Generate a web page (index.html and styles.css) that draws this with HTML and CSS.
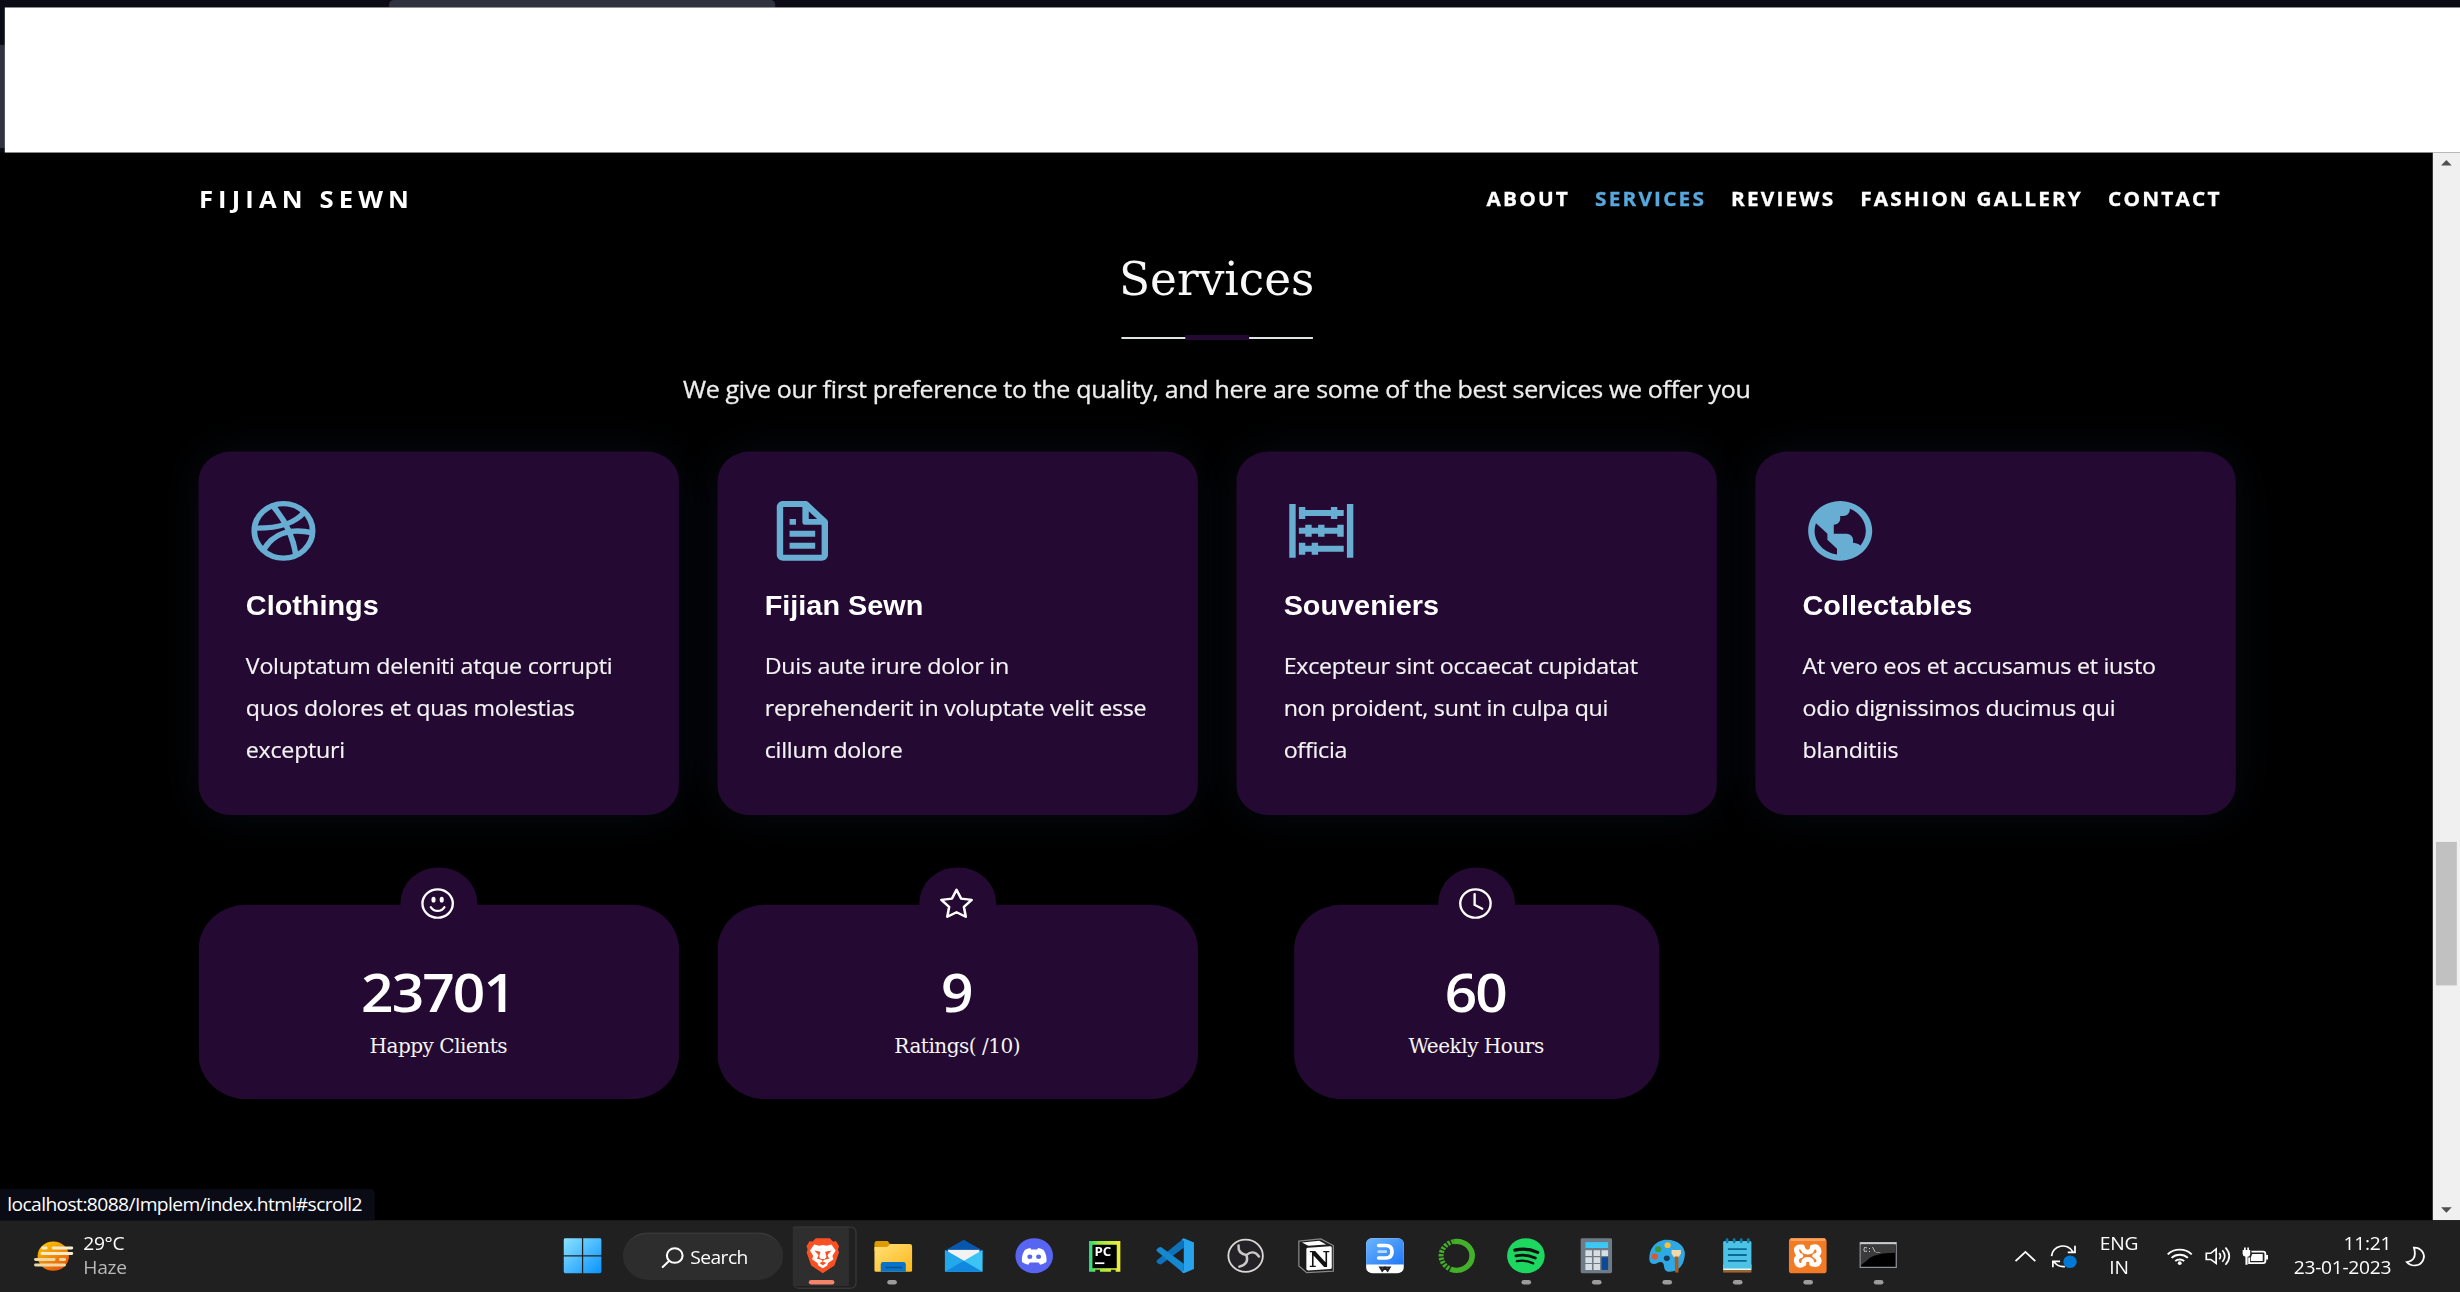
FILE: index.html
```html
<!DOCTYPE html>
<html lang="en">
<head>
<meta charset="utf-8">
<title>Fijian Sewn</title>
<link rel="stylesheet" href="styles.css">
</head>
<body>
<div class="screen">
  <div class="browser-top"><div class="tab"></div><div class="edge"></div><div class="blank"></div></div>

  <div class="viewport">
    <main class="page">
      <header class="header">
        <div class="brand">FIJIAN SEWN</div>
        <nav class="nav">
          <a>ABOUT</a><a class="active">SERVICES</a><a>REVIEWS</a><a>FASHION GALLERY</a><a>CONTACT</a>
        </nav>
      </header>

      <section class="intro">
        <h2>Services</h2>
        <svg class="rule" viewBox="0 0 120 3.340"><path fill="#dde4e4" d="M0 1.340h120v1.340H0z"/><path fill="#240a33" d="M40 0h40v3.340H40z"/></svg>
        <p>We give our first preference to the quality, and here are some of the best services we offer you</p>
      </section>

      <section class="cards">
        <article class="card">
          <svg viewBox="0 0 24 24" fill="none" stroke="currentColor" stroke-width="1.8"><circle cx="12" cy="12" r="9.1"/><path d="M8.7 3.7Q14.6 11 15.9 20.2M3 11.1C10 11.2 15.6 9.6 18.5 5.7M5.7 18.6C8.8 12.6 14.5 11 21.2 12.7"/></svg>
          <h4>Clothings</h4>
          <p>Voluptatum deleniti atque corrupti<br>quos dolores et quas molestias<br>excepturi</p>
        </article>
        <article class="card">
          <svg viewBox="0 0 24 24" fill="currentColor"><path d="M19.903 8.586a.997.997 0 0 0-.196-.293l-6-6a.997.997 0 0 0-.293-.196c-.03-.014-.062-.022-.094-.033a.991.991 0 0 0-.259-.051C13.04 2.011 13.021 2 13 2H6c-1.103 0-2 .897-2 2v16c0 1.103.897 2 2 2h12c1.103 0 2-.897 2-2V9c0-.021-.011-.04-.013-.062a.952.952 0 0 0-.051-.259c-.01-.032-.019-.063-.033-.093zM16.586 8H14V5.414L16.586 8zM6 20V4h6v5a1 1 0 0 0 1 1h5l.002 10H6z"/><path d="M8 12h8v2H8zm0 4h8v2H8zm0-8h2v2H8z"/></svg>
          <h4>Fijian Sewn</h4>
          <p>Duis aute irure dolor in<br>reprehenderit in voluptate velit esse<br>cillum dolore</p>
        </article>
        <article class="card">
          <svg viewBox="0 0 24 24" fill="currentColor"><path d="M2 3h2v18H2zM20 3h2v18h-2zM5 5h14v2H5zM5 11h14v2H5zM5 17h14v2H5zM5 4h2v4H5zM15 4h2v4h-2zM7 10h2v4H7zM11 10h2v4h-2zM17 10h2v4h-2zM5 16h2v4H5zM9 16h2v4H9z"/></svg>
          <h4>Souveniers</h4>
          <p>Excepteur sint occaecat cupidatat<br>non proident, sunt in culpa qui<br>officia</p>
        </article>
        <article class="card">
          <svg viewBox="0 0 24 24" fill="currentColor"><path d="M12 2C6.486 2 2 6.486 2 12s4.486 10 10 10 10-4.486 10-10S17.514 2 12 2zM4 12c0-.899.156-1.762.431-2.569L6 11l2 2v2l2 2 1 1v1.931C7.061 19.436 4 16.072 4 12zm14.33 4.873C17.677 16.347 16.687 16 16 16v-1a2 2 0 0 0-2-2h-4v-3a2 2 0 0 0 2-2V7h1a2 2 0 0 0 2-2v-.411C17.928 5.778 20 8.65 20 12a7.947 7.947 0 0 1-1.67 4.873z"/></svg>
          <h4>Collectables</h4>
          <p>At vero eos et accusamus et iusto<br>odio dignissimos ducimus qui<br>blanditiis</p>
        </article>
      </section>

      <section class="counts">
        <div class="count">
          <div class="badge"><svg viewBox="0 0 16 16" fill="none" stroke="#fff" stroke-width="1.150"><circle cx="8" cy="8" r="7.4"/><path d="M4.7 9.9a3.8 3.8 0 0 0 6.6 0" stroke-linecap="round"/><ellipse cx="6" cy="6" rx="1" ry="1.5" fill="#fff" stroke="none"/><ellipse cx="10" cy="6" rx="1" ry="1.5" fill="#fff" stroke="none"/></svg></div>
          <strong>23701</strong><span>Happy Clients</span>
        </div>
        <div class="count">
          <div class="badge"><svg viewBox="0 0 16 16" fill="none" stroke="#fff" stroke-width="1.250" stroke-linejoin="round"><path d="M8 .8l2.2 4.6 5.2.7-3.8 3.6.9 5.2L8 12.5l-4.5 2.4.9-5.2L.6 6.100l5.200-.7z"/></svg></div>
          <strong>9</strong><span>Ratings( /10)</span>
        </div>
        <div class="count narrow">
          <div class="badge"><svg viewBox="0 0 16 16" fill="none" stroke="#fff" stroke-width="1.150" stroke-linecap="round"><circle cx="8" cy="8" r="7.4"/><path d="M7.600 3v5.700l3.700 2"/></svg></div>
          <strong>60</strong><span>Weekly Hours</span>
        </div>
      </section>
    </main>

    <div class="scrollbar">
      <svg viewBox="0 0 10 6"><path d="M0 5.500L5 0l5 5.500z"/></svg>
      <div class="thumb"></div>
      <svg viewBox="0 0 10 6"><path d="M0 .5L5 6l5-5.500z"/></svg>
    </div>
    <div class="status">localhost:8088/Implem/index.html#scroll2</div>
  </div>

  <footer class="taskbar">
    <div class="weather">
      <svg viewBox="0 0 24 20"><defs><linearGradient id="sun" x1="0" y1="0" x2=".6" y2="1"><stop offset="0" stop-color="#fdd000"/><stop offset="1" stop-color="#ea5a08"/></linearGradient></defs><circle cx="12" cy="10" r="9.800" fill="url(#sun)"/><g stroke="#f7ecd0" stroke-width="2" stroke-linecap="round"><path d="M5.500 4.500h2M12 4.500h11.500M5 8.200h18.500"/><path stroke="#ecd7a5" d="M1 12.300h11.500M16.500 12.300h2.500M1 16h18"/></g></svg>
      <div><b>29°C</b><span>Haze</span></div>
    </div>

    <div class="apps">
      <svg class="win" viewBox="0 0 24 24"><defs><linearGradient id="w" x1="0" y1="0" x2="1" y2="1"><stop offset="0" stop-color="#8be2ff"/><stop offset="1" stop-color="#0a93ff"/></linearGradient></defs><path fill="url(#w)" d="M0 1q0-1 1-1h10.600v11.700H0zM12.400 0H23q1 0 1 1v10.700H12.400zM0 12.500h11.600V24H1q-1 0-1-1zM12.400 12.500H24V23q0 1-1 1H12.400z"/></svg>
      <div class="search"><svg viewBox="0 0 14 14" fill="none" stroke="#fff" stroke-width="1.300" stroke-linecap="round"><circle cx="8.300" cy="5.600" r="4.900"/><path d="M4.800 9.200L.8 13.300"/></svg><span>Search</span></div>

      <div class="app current"><svg viewBox="0 0 24 24"><path fill="#fb5024" d="M7.500 0h9l2 2.300 2-.2 1.900 3.400-.7 2.100.6 2.200-2.900 8.900L12 24l-7.400-5.300L1.700 9.800l.6-2.200-.7-2.100 1.900-3.400 2 .2z"/><path fill="#fff" d="M6.500 4.400l3.200.8 2.300-.6 2.300.6 3.200-.8 2.700 4-2.100 3.800.7 2.200-3.400 2.500-.7 2L12 20.500l-2.700-1.600-.7-2-3.400-2.500.7-2.200-2.100-3.800z"/><path fill="#fb5024" d="M6.500 8.500l4 .8-.8 3.500 1.100 1.500h2.400l1.100-1.500-.8-3.500 4-.8-2.500 3 1 2.500-3.200.7-.8 1.200h-.1l-.8-1.200-2.800-.7 1-2.500zM9.800 17l2.200-1 2.200 1-2.200 1.500z"/></svg></div>

      <div class="app dot"><svg viewBox="0 0 24 24"><defs><linearGradient id="fo" x1="0" y1="0" x2="1" y2="1"><stop offset="0" stop-color="#ffe078"/><stop offset="1" stop-color="#ffb81a"/></linearGradient></defs><path fill="#dd9b00" d="M0 4q0-2 1.500-2h7l2 3v4H0z"/><path fill="url(#fo)" d="M0 6h8l2-2h12.500q1.500 0 1.500 1.500V22q0 1-1 1H1q-1 0-1-1z"/><path fill="#0873c9" d="M4 23v-5q0-1.700 1.500-1.700h13q1.500 0 1.500 1.700v5z"/><path stroke="#07518f" d="M7 20h10.500"/></svg></div>

      <div class="app"><svg viewBox="0 0 24 24"><path fill="#0758ad" d="M0 8.500L12 1l12 7.500v6H0z"/><path fill="#f2f2f2" d="M2 8h20v9H2z"/><path fill="#3cc5f4" d="M24 8v15H0z"/><path fill="#1188df" d="M0 8l24 15H1q-1 0-1-1z"/><path fill="#24a8ec" d="M0 8l12 7.500L0 23z"/></svg></div>

      <div class="app"><svg viewBox="0 0 24 24"><circle cx="12" cy="12" r="12" fill="#5865f2"/><path fill="#fff" d="M9.500 6.800l.6 1h3.800l.6-1q2 .3 3.500 1.300 2.200 3.600 1.800 8.100-2 1.500-4 1.900l-1-1.500H9.200l-1 1.500q-2-.4-4-1.900Q3.800 11.700 6 8.100q1.500-1 3.500-1.300z"/><circle cx="9.200" cy="12.700" r="1.600" fill="#5865f2"/><circle cx="14.800" cy="12.700" r="1.600" fill="#5865f2"/></svg></div>

      <div class="app"><svg viewBox="0 0 24 24"><defs><linearGradient id="pc" x1="0" y1="0" x2="1" y2="0"><stop offset="0" stop-color="#21d789"/><stop offset=".3" stop-color="#9be83f"/><stop offset="1" stop-color="#f0ee3b"/></linearGradient></defs><path fill="url(#pc)" d="M2 2h20v21h-3v-1.500h-3V23H9v-1.500H6V23H2z"/><path d="M4.200 4.500h15.500v16H4.200z"/><text x="5.500" y="12.200" font-family="Open Sans, sans-serif" font-weight="700" font-size="8.500" fill="#fff">PC</text><path fill="#fff" d="M5.800 16.500h6v1.200h-6z"/></svg></div>

      <div class="app"><svg viewBox="0 0 24 24"><path fill="#0c72ba" d="M17.500 0v6.500L3 18l-1.500-.3L.2 16.500v-1.300z"/><path fill="#1688d0" d="M17.500 24v-6.500L3 6 1.500 6.300.2 7.500v1.300z"/><path fill="#27a3ee" d="M17.500 0L24 3v18l-6.500 3-1.500-1 1.500-1V2L16 1z"/></svg></div>

      <div class="app"><svg viewBox="0 0 24 24" fill="none"><circle cx="12" cy="12" r="11" fill="#242226" stroke="#d8d8d8" stroke-width="1.200"/><path stroke="#c9c9c9" stroke-width="1.600" stroke-linecap="round" d="M7.500 5q-.5 5.500 5 6.500Q17 7.500 20.500 12.500M12.500 11.500q2 6-4.500 8"/></svg></div>

      <div class="app"><svg viewBox="0 0 24 24"><path fill="#1b1b1b" stroke="#888" stroke-width=".8" d="M1 2l14-1.500 8 4.500v17.500L6 23.500 1 19z"/><path fill="#fff" d="M3 3l11-1.200 4.500 2.500L7 5.200zM5.800 7.500q0-1 1-1L21 5.600q1 0 1 1V20q0 1-1 1.100l-14 .9q-1.200 0-1.200-1z"/><text x="7.300" y="19.500" font-family="DejaVu Serif, serif" font-weight="700" font-size="15" fill="#111">N</text></svg></div>

      <div class="app"><svg viewBox="0 0 24 24"><defs><linearGradient id="d" x1="0" y1="0" x2="1" y2="1"><stop offset="0" stop-color="#6bb5ff"/><stop offset="1" stop-color="#2178f5"/></linearGradient></defs><rect width="24" height="24" rx="4" fill="#fff"/><path fill="url(#d)" d="M0 4q0-4 4-4h16q4 0 4 4v14H0z"/><path fill="none" stroke="#fff" stroke-width="2.400" stroke-linecap="round" d="M8 5h4.500q4 0 4 4.200t-4 4.300H8"/><path stroke="#b9dcff" stroke-width="1.800" stroke-linecap="round" d="M8 9.200h4.500"/><path fill="none" stroke="#222" stroke-width="1.300" d="M9 20l1.300 2.300L12 20l1.700 2.300L15 20z"/></svg></div>

      <div class="app"><svg viewBox="0 0 24 24" fill="none" stroke="#43b02a"><path stroke-width="3.600" d="M11 2.300A9.900 9.900 0 1 1 9 21.200"/><path stroke-width="3.200" stroke-dasharray="1.600 .9" d="M11 2.300A9.900 9.900 0 0 0 9 21.200"/></svg></div>

      <div class="app dot"><svg viewBox="0 0 24 24" fill="none" stroke="#111" stroke-linecap="round"><circle cx="12" cy="12" r="12" fill="#1ed760" stroke="none"/><path stroke-width="2.200" d="M5 8.200q7.500-1.900 14.500 1.500"/><path stroke-width="1.900" d="M5.700 12.100q6.300-1.600 12.300 1.500"/><path stroke-width="1.600" d="M6.300 15.700q5.500-1.200 10.300 1.500"/></svg></div>

      <div class="app dot"><svg viewBox="0 0 24 24"><rect x="2" width="20" height="24" rx="1" fill="#6e7a86"/><path fill="#3cc8f4" d="M5 2.700h14.500v4H5z"/><path fill="#d7dde2" d="M5 8.200h4.200v4H5zM10.200 8.200h4.200v4h-4.200zM15.300 8.200h4.200v4h-4.200zM5 13h4.200v4H5zM10.200 13h4.200v4h-4.200zM5 17.700h4.200v4H5zM10.200 17.700h4.200v4h-4.200z"/><path fill="#0c4a94" d="M15.300 13h4.200v8.700h-4.200z"/></svg></div>

      <div class="app dot"><svg viewBox="0 0 24 24"><path fill="#2fa9e6" d="M12 1c7 0 11.500 4.500 11.500 9.500 0 6-3 12.500-9.500 12.500-4 0-3.500-3-4-5s-2.500-2-4-1-4.500 1-5-1.500C0 7.500 5 1 12 1z"/><circle cx="6.500" cy="7.500" r="2" fill="#3a9b35"/><circle cx="12.500" cy="4.800" r="2" fill="#f5c03a"/><circle cx="4.300" cy="12.500" r="2" fill="#e5532d"/><circle cx="12" cy="13.800" r="1.900" fill="#163c5c"/><path fill="#f3d9a8" d="M15 8h6v2.500l-1.500 2.500h-3L15 10.500z"/><path fill="#a55d20" d="M17 12.500h2.300l.2 11h-2.200z"/></svg></div>

      <div class="app dot"><svg viewBox="0 0 24 24"><path fill="#e9f4f9" d="M3 18h18v4H3z"/><path fill="#a86424" d="M3 22h18v1.500H3z"/><path fill="#4cc2e4" d="M3 3q0-1 1-1h16q1 0 1 1v17.700H3z"/><path stroke="#0a6a96" stroke-width="1.300" d="M6 7.500h12M6 11.500h12M6 15.500h12"/><path stroke="#127aa8" stroke-width="1.800" stroke-linecap="round" d="M5.500 1v1.500M10 1v1.500M14.500 1v1.500M19 1v1.500"/></svg></div>

      <div class="app dot"><svg viewBox="0 0 24 24"><rect width="24" height="24" rx="2" fill="#f47b25"/><path fill="#fba45f" d="M1 0h22v2H1z"/><path fill="none" stroke="#fff" stroke-width="3.200" stroke-linecap="round" stroke-linejoin="round" d="M8.500 6Q4 5.500 5 9t2.500 3Q4 13 5 16.500T9.500 17.500Q9 14.500 12 14.500T14.500 17.500Q18 19 19 16.500T16.500 12Q20 11 19 8T15 6Q15 9.500 12 9.500T8.500 6z"/></svg></div>

      <div class="app dot"><svg viewBox="0 0 24 24"><path stroke="#8d9297" stroke-width=".8" d="M.5 3h23v17H.5z"/><path fill="#c9cdd0" d="M.5 2.800h23v1.600H.5z"/><path fill="#3b3b3b" d="M1 4.400h22v5.500Q9 10 5 15l-4 3.500z"/><text x="2.500" y="9.300" font-family="Liberation Mono, monospace" font-size="4.500" fill="#eee">C:\_</text></svg></div>
    </div>

    <div class="tray">
      <svg class="chev" viewBox="0 0 14 8" fill="none" stroke="#fff" stroke-width="1.200"><path d="M.5 7.500L7 1l6.500 6.500"/></svg>
      <svg class="sync" viewBox="0 0 16 16" fill="none" stroke="#fff" stroke-width="1.100"><path d="M.7 8A7 7 0 0 1 14 5.200M15.300 1v4.500h-4.500M1.500 15.500v-4H6M2 11.500q2.500 4 7 3.500"/><circle cx="12.200" cy="11.800" r="4.200" fill="#0078d4" stroke="none"/></svg>
      <div class="lang">ENG<br>IN</div>
      <svg class="net" viewBox="0 0 16 12" fill="none" stroke="#fff" stroke-width="1.200"><path d="M.5 4.800a10.500 10.500 0 0 1 15 0M2.900 7.200a7.200 7.200 0 0 1 10.200 0M5.200 9.400a4 4 0 0 1 5.600 0"/><circle cx="8" cy="10.700" r="1.200" fill="#fff" stroke="none"/></svg>
      <svg class="vol" viewBox="0 0 17 14" fill="none" stroke="#fff" stroke-width="1.100"><path d="M.6 5h2.900L7 2v10L3.500 9.300H.6zM9 4.800q1.600 2.200 0 4.400M11 3q3.200 4 0 8M13 1q5 6 0 12"/></svg>
      <svg class="bat" viewBox="0 0 17 13"><path fill="none" stroke="#fff" stroke-width="1.200" d="M6 2.800h7.500q1.500 0 1.500 1.500v5q0 1.500-1.500 1.500H4.500V7"/><path fill="#fff" d="M6.500 4.500h6.800v4.800H5.600V7zM15.300 5.200h1.400v3.200h-1.400zM.3 1.800h.9V0h1.100v1.800h1V0h1.100v1.800h.8v3Q5 6.300 3.500 6.500V12H2.100V6.500Q.3 6 .3 4.500z"/></svg>
      <div class="clock">11:21<br>23-01-2023</div>
      <svg class="moon" viewBox="0 0 14 14" fill="none" stroke="#fff" stroke-width="1.200"><path d="M5.500 1A6.300 6.300 0 1 1 .8 11.200Q8 10 5.500 1z"/></svg>
    </div>
  </footer>
</div>
</body>
</html>
```

FILE: styles.css
```css
* { box-sizing: border-box; margin: 0; padding: 0; }

body {
  width: 2460px;
  height: 1292px;
  overflow: hidden;
  background: #000;
  font-family: "Open Sans", "Noto Sans", sans-serif;
  color: #fff;
}

svg { display: block; flex: none; overflow: visible; }

/* A 1536x864 desktop, drawn to fill the window */
.screen {
  width: 1536px;
  height: 864px;
  transform: scale(1.6015625, 1.4953704);
  transform-origin: 0 0;
  display: flex;
  flex-direction: column;
}

/* Browser chrome */
.browser-top {
  height: 101.650px;
  flex: none;
  background: #0b0b16;
  display: grid;
  grid-template-columns: 3.120px 1fr;
  grid-template-rows: 4.680px 25.400px 69px 1fr;
}
.tab { grid-column: 2; grid-row: 1; width: 241px; margin-left: 240px; background: #30323f; border-radius: 3px 3px 0 0; }
.edge { grid-column: 1; grid-row: 3; background: #30323f; }
.blank { grid-column: 2; grid-row: 2 / 5; background: #fff; }

.viewport { position: relative; flex: 1; display: flex; min-height: 0; }
.page { flex: 1; padding: 0 0 0 124.200px; overflow: hidden; }

.header { height: 62.400px; width: 1263px; display: flex; align-items: center; justify-content: space-between; }
.brand { font-size: 16px; font-weight: 700; letter-spacing: 3.200px; line-height: 24px; }
.nav { display: flex; gap: 15.600px; padding-top: 1px; font-size: 13px; font-weight: 700; letter-spacing: 1.350px; line-height: 20px; -webkit-text-stroke: .2px currentColor; }
.nav .active { color: #57a8de; }

.intro { width: 1271px; display: flex; flex-direction: column; align-items: center; }
.intro h2 { font: 400 31.500px/44px "DejaVu Serif Condensed", "DejaVu Serif", serif; color: #f8f8f8; }
.rule { width: 120px; height: 3.340px; margin-top: 16px; }
.intro p { margin-top: 20.400px; font-size: 15.600px; line-height: 24px; height: 23.400px; color: #eee; white-space: nowrap; letter-spacing: -.2px; -webkit-text-stroke: .2px currentColor; }

.cards { display: grid; grid-template-columns: repeat(4, 300px); gap: 24px; margin-top: 30.500px; }
.card { height: 243.400px; padding: 29px 0 0 29.300px; border-radius: 20px; background: #240a33; box-shadow: 0 0 30px rgba(68, 88, 144, .13); }
.card svg { width: 48px; height: 48px; color: #68aed2; }
.card h4 { font: 700 18px/22px "Liberation Sans", sans-serif; margin-top: 15.800px; }
.card p { margin-top: 15.900px; font-size: 14.500px; line-height: 28px; white-space: nowrap; color: #f4f4f4; letter-spacing: -.16px; -webkit-text-stroke: .12px currentColor; }

.counts { display: grid; grid-template-columns: repeat(4, 300px); gap: 24px; margin-top: 59.500px; }
.count { position: relative; height: 130.200px; padding-top: 38.400px; border-radius: 30px; background: #240a33; display: flex; flex-direction: column; align-items: center; }
.count.narrow { margin: 0 36px; }
.badge { position: absolute; top: -24.700px; left: 50%; width: 48px; height: 48px; margin-left: -24.600px; border-radius: 50%; background: #240a33; display: flex; align-items: center; justify-content: center; }
.badge svg { width: 20.500px; height: 20.500px; }
.count strong { margin-left: -2px; font-size: 35.500px; line-height: 40px; font-weight: 600; letter-spacing: -1.200px; }
.count span { margin: 6.500px 0 0 -1px; font: 400 13.900px/20px "DejaVu Serif Condensed", "DejaVu Serif", serif; letter-spacing: -.3px; color: #f4f4f4; }

.scrollbar { width: 17px; flex: none; background: #f0f0f0; padding: 5px 2px 4.500px; display: flex; flex-direction: column; align-items: center; justify-content: space-between; }
.scrollbar svg { width: 7px; height: 4px; fill: #505050; }
.thumb { width: 13px; height: 95.600px; margin-top: 303.500px; background: #c1c1c1; }

.status { position: absolute; left: 0; bottom: 0; width: 233.500px; height: 21.500px; padding-left: 4.500px; border-radius: 0 3px 0 0; background: #0b0b16; font-size: 12px; line-height: 21.500px; white-space: nowrap; letter-spacing: -.37px; }

/* Taskbar */
.taskbar { height: 48px; flex: none; background: #202020; display: flex; align-items: center; font-size: 12px; line-height: 16px; position: relative; }
.weather { width: 352px; padding-left: 20.500px; display: flex; align-items: center; gap: 7px; flex: none; }
.weather svg { width: 24.500px; height: 20px; }
.weather b, .weather span { display: block; font-weight: 400; letter-spacing: -.2px; }
.weather span { color: #b8b8b8; }

.apps { display: flex; align-items: center; flex: none; }
.win { width: 23.500px; height: 23.500px; }
.search { width: 99.500px; height: 32px; margin: 0 3px 0 13.500px; border-radius: 16px; background: #2d2d2d; border-top: 1px solid #3a3a3a; display: flex; align-items: center; padding-left: 23.500px; gap: 4.500px; }
.search svg { width: 14px; height: 14px; }
.search span { letter-spacing: -.35px; }
.app { position: relative; width: 43.980px; height: 40px; display: flex; align-items: center; justify-content: center; }
.app svg { width: 23.500px; height: 23.500px; }
.app.current { background: linear-gradient(#2e2e2e, #2e2e2e) 3px 0 / 35px 100% no-repeat; }
.app.current::before { content: ""; position: absolute; left: 3px; top: 0; width: 39px; height: 40px; border-radius: 4px; border: 1px solid #353535; border-left: 0; }
.app.dot::after, .app.current::after { content: ""; position: absolute; left: 50%; bottom: .6px; width: 6px; height: 3.300px; margin-left: -3px; border-radius: 1.600px; background: #9c9c9c; }
.app.current::after { width: 16px; margin-left: -8px; background: #f4846a; }

.tray { display: flex; align-items: center; flex: none; margin-left: auto; padding-right: 20.400px; }
.chev { width: 13.300px; height: 8px; }
.sync { width: 16.600px; height: 16px; margin-left: 9px; }
.lang { width: 28px; margin-left: 12px; text-align: center; letter-spacing: -.2px; }
.net { width: 16px; height: 12px; margin-left: 15.800px; }
.vol { width: 16.400px; height: 14px; margin-left: 8px; }
.bat { width: 16.400px; height: 13px; margin-left: 7.200px; }
.clock { width: 70px; margin-left: 6.200px; text-align: right; letter-spacing: -.18px; }
.moon { width: 13.300px; height: 14px; margin-left: 9.300px; }
```
